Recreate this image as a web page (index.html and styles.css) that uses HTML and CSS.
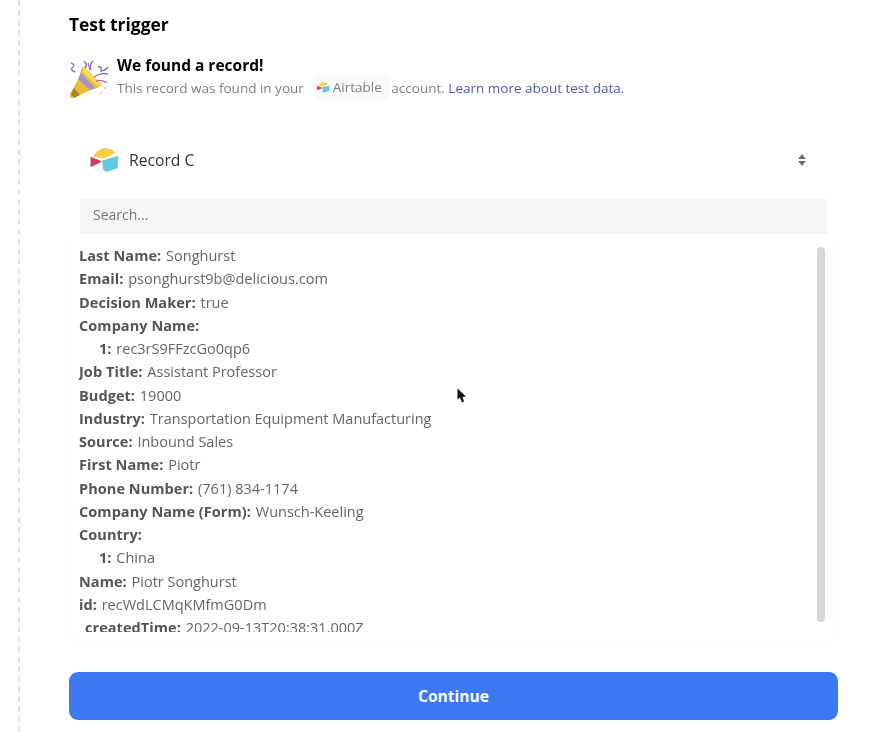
FILE: index.html
```html
<!DOCTYPE html>
<html lang="en">
<head>
<meta charset="utf-8">
<title>Test trigger</title>
<link rel="stylesheet" href="styles.css">
</head>
<body>
<div class="page">
  <main class="main">
    <h1 class="title">Test trigger</h1>
    <section class="found">
      <svg class="party" viewBox="0 0 40 40" width="40" height="40" aria-hidden="true">
        <path d="M14 7 L33 25 Q28 30 22 31 L4 39 Q0 39 1 35 L10 19 Q11 12 14 7 Z" fill="#e6bf35"/>
        <path d="M12 14 L26 29 L21 31 L9 20 Z" fill="#a294cc"/>
        <path d="M14 7 L33 25 L27 26 L14 13 Z" fill="#f2da66"/>
        <path d="M5 29 L11 36 L5 39 L2 35 Z" fill="#a9862a"/>
        <path d="M16 9 Q19 6 15 2 M22 11 Q20 6 24 2 M29 8 Q33 7 32 12 Q36 12 39 8 M2 4 Q7 6 3 9 Q1 11 6 13 M25 18 Q32 13 39 15" fill="none" stroke="#8a7cc8" stroke-width="1.500"/>
        <path d="M19 4 L21 11 M27 22 Q33 20 38 24" fill="none" stroke="#c2689a" stroke-width="1.200"/>
        <circle cx="36" cy="29" r="1" fill="#e4b7c6"/>
        <circle cx="32" cy="34" r="1" fill="#d9c78a"/>
      </svg>
      <div class="found-text">
        <h2 class="found-title">We found a record!</h2>
        <p class="found-sub">This record was found in your
          <span class="chip">
            <svg class="logo-small" viewBox="0 0 30 26" width="13" height="11" aria-hidden="true">
              <path d="M3 9 Q5 3 14 0 Q22 0 26 5 L14 11 Z" fill="#f5d04c"/>
              <path d="M12 13 L29 8 L28 21 L16 25 L13 22 Z" fill="#5ec6de"/>
              <path d="M0 9 L12 14 L0 20 Z" fill="#d8395a"/>
            </svg>Airtable</span>
          account. <a class="link" href="#">Learn more about test data.</a></p>
      </div>
    </section>

    <section class="picker">
      <div class="select">
        <svg class="logo" viewBox="0 0 30 26" width="30" height="25" aria-hidden="true">
          <path d="M3 9 Q5 3 14 0 Q22 0 26 5 L14 11 Z" fill="#f3cf4a"/>
          <path d="M12 13 L29 8 L28 21 L16 25 L13 22 Z" fill="#63c7df"/>
          <path d="M0 9 L12 14 L0 20 Z" fill="#d23a5c"/>
        </svg>
        <span class="select-label">Record C</span>
        <svg class="updown" viewBox="0 0 10 14" width="10" height="14" aria-hidden="true">
          <path d="M5 1 L9 6 L1 6 Z M1 8 L9 8 L5 13 Z" fill="#6f6f6f"/>
        </svg>
      </div>
      <div class="search">Search...</div>
    </section>

    <section class="record">
      <div class="rows">
        <div class="row"><b>Last Name:</b> Songhurst</div>
        <div class="row"><b>Email:</b> psonghurst9b@delicious.com</div>
        <div class="row"><b>Decision Maker:</b> true</div>
        <div class="row"><b>Company Name:</b></div>
        <div class="row nested"><b>1:</b> rec3rS9FFzcGo0qp6</div>
        <div class="row"><b>Job Title:</b> Assistant Professor</div>
        <div class="row"><b>Budget:</b> 19000</div>
        <div class="row"><b>Industry:</b> Transportation Equipment Manufacturing</div>
        <div class="row"><b>Source:</b> Inbound Sales</div>
        <div class="row"><b>First Name:</b> Piotr</div>
        <div class="row"><b>Phone Number:</b> (761) 834-1174</div>
        <div class="row"><b>Company Name (Form):</b> Wunsch-Keeling</div>
        <div class="row"><b>Country:</b></div>
        <div class="row nested"><b>1:</b> China</div>
        <div class="row"><b>Name:</b> Piotr Songhurst</div>
        <div class="row"><b>id:</b> recWdLCMqKMfmG0Dm</div>
        <div class="row meta"><b>createdTime:</b> 2022-09-13T20:38:31.000Z</div>
      </div>
      <div class="scrollbar"></div>
    </section>

    <button class="continue" type="button">Continue</button>

    <svg class="cursor" viewBox="0 0 10 16" width="10" height="16" aria-hidden="true">
      <path d="M0.500 0.500 L0.500 11.500 L3 9.500 L5 14.500 L7 13.500 L5.500 9 L9 8.500 Z" fill="#111"/>
    </svg>
  </main>
</div>
</body>
</html>
```
FILE: styles.css
```css
* { box-sizing: border-box; }
html, body { margin: 0; height: 100%; overflow: hidden; background: #fff; }
body { font-family: "Open Sans", "Liberation Sans", sans-serif; color: #555; }

.page {
  height: 732px;
  margin-left: 18px;
  border-left: 2px dashed #e2e2e2;
  filter: blur(0.5px);
  overflow: hidden;
}
.main {
  position: relative;
  width: 769px;
  margin-left: 49px;
  display: flex;
  flex-direction: column;
}
.cursor {
  position: absolute;
  left: 388px;
  top: 388px;
}
.title {
  margin: 13px 0 0;
  font-size: 17.400px;
  line-height: 22px;
  font-weight: 700;
  color: #000;
}
.found {
  display: flex;
  gap: 8px;
  margin-top: 20px;
}
.party { flex: none; margin-top: 4px; }
.found-title {
  margin: 0;
  font-size: 15.500px;
  line-height: 20px;
  font-weight: 700;
  color: #000;
}
.found-sub {
  margin: 2px 0 0;
  font-size: 13.500px;
  line-height: 20px;
  color: #808080;
  white-space: nowrap;
}
.chip {
  display: inline-flex;
  align-items: center;
  gap: 3px;
  height: 20px;
  padding-right: 5px;
  margin: 0 1px 0 9.500px;
  background: #fafafa;
  box-shadow: 0 0 0 3px #fafafa;
  border-radius: 2px;
}
.link { color: #4a5cb8; text-decoration: none; }

.picker { margin: 36px 0 0 11px; width: 747px; }
.select {
  display: flex;
  align-items: center;
  height: 50px;
  padding-left: 10px;
}
.logo { flex: none; }
.select-label { margin-left: 9px; font-size: 15.700px; color: #333; }
.updown { margin-left: auto; margin-right: 20px; }
.search {
  height: 35px;
  margin-top: 14px;
  padding-left: 13px;
  font-size: 14px;
  line-height: 32px;
  color: #777;
  background: #f5f5f5;
  border-bottom: 3px solid #f1f1f1;
}

.record {
  display: flex;
  height: 397px;
  margin-top: 10px;
  padding-left: 9px;
  border: 1px solid #fafafa;
  border-top: 0;
  border-radius: 0 0 8px 8px;
}
.rows {
  flex: 1;
  height: 388px;
  overflow: hidden;
  font-size: 14.500px;
  line-height: 23.250px;
  color: #666;
}
.row { white-space: nowrap; }
.row b { font-weight: 700; color: #555; letter-spacing: 0.06px; margin-right: 1px; }
.nested { padding-left: 20px; }
.meta { padding-left: 6px; }
.scrollbar {
  flex: none;
  width: 8px;
  height: 375px;
  margin: 3px 12px 0 0;
  border-radius: 4px;
  background: #d6d6d6;
}

.continue {
  height: 48px;
  margin-top: 31px;
  border: 0;
  border-radius: 9px;
  background: #3b78f2;
  color: #fff;
  font: 700 15.600px "Open Sans", "Liberation Sans", sans-serif;
}
```
